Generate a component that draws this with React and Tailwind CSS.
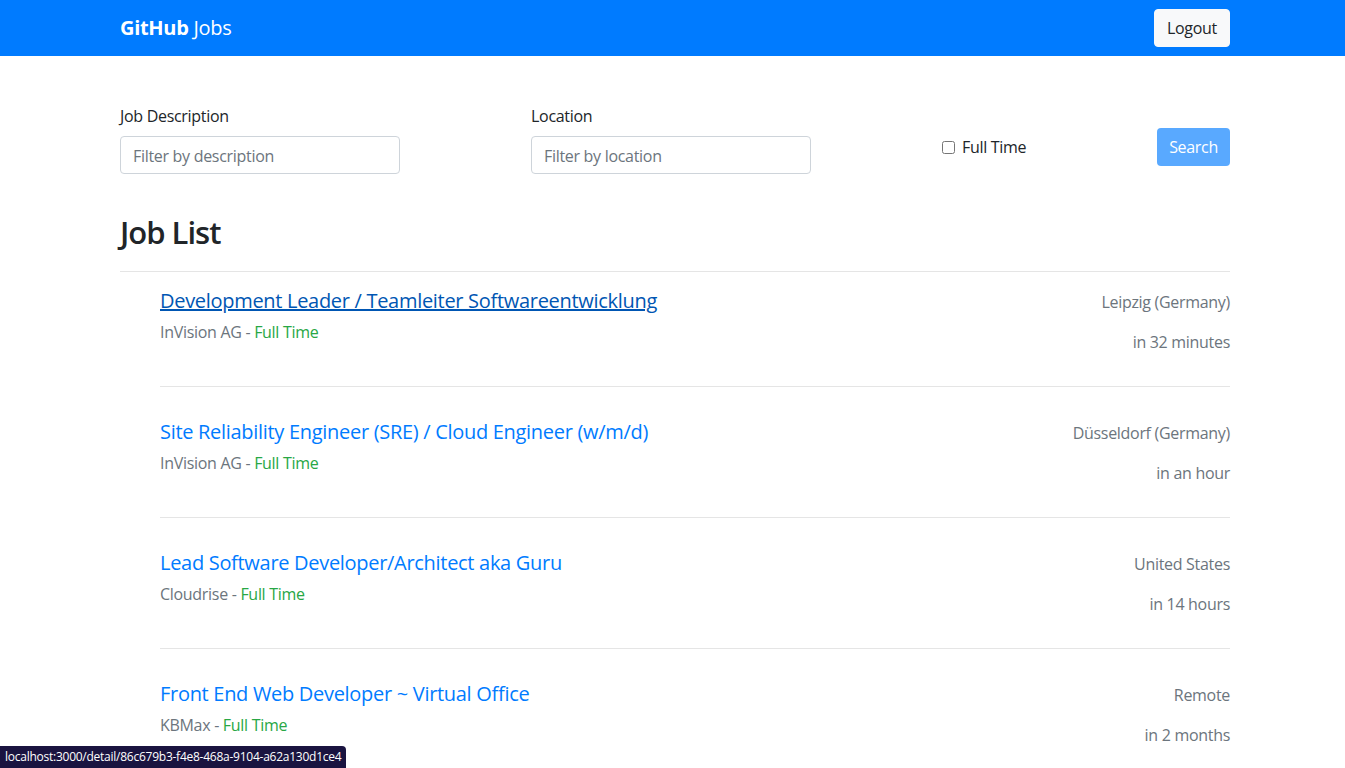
import { useState } from 'react';

const jobs = [
  {
    title: 'Development Leader / Teamleiter Softwareentwicklung',
    company: 'InVision AG',
    location: 'Leipzig (Germany)',
    posted: 'in 32 minutes',
    hovered: true,
  },
  {
    title: 'Site Reliability Engineer (SRE) / Cloud Engineer (w/m/d)',
    company: 'InVision AG',
    location: 'Düsseldorf (Germany)',
    posted: 'in an hour',
  },
  {
    title: 'Lead Software Developer/Architect aka Guru',
    company: 'Cloudrise',
    location: 'United States',
    posted: 'in 14 hours',
  },
  {
    title: 'Front End Web Developer ~ Virtual Office',
    company: 'KBMax',
    location: 'Remote',
    posted: 'in 2 months',
  },
];

export default function App() {
  const [description, setDescription] = useState('');
  const [location, setLocation] = useState('');
  const [fullTime, setFullTime] = useState(false);

  return (
    <div className="min-h-screen bg-white text-[#212529] font-['Open_Sans','Noto_Sans',sans-serif] text-[16px] tracking-[-0.3px]">
      {/* navbar */}
      <nav className="h-14 bg-[#007bff]">
        <div className="w-[1110px] ml-[120px] h-full flex items-center justify-between">
          <a href="#" className="text-white text-[20px] leading-none">
            <span className="font-bold">GitHub</span> Jobs
          </a>
          <button className="h-[38px] px-[12px] rounded bg-[#f8f9fa] text-[#212529] text-[16px] border border-[#f8f9fa]">
            Logout
          </button>
        </div>
      </nav>

      <main className="w-[1110px] ml-[120px] pt-12">
        {/* search form */}
        <div className="flex items-end">
          <div className="w-[411px]">
            <label className="block mb-2 leading-6">Job Description</label>
            <input
              value={description}
              onChange={(e) => setDescription(e.target.value)}
              placeholder="Filter by description"
              className="w-[280px] h-[38px] px-3 pt-px border border-[#ced4da] rounded placeholder:text-[#6c757d] outline-none"
            />
          </div>
          <div className="w-[411px]">
            <label className="block mb-2 leading-6">Location</label>
            <input
              value={location}
              onChange={(e) => setLocation(e.target.value)}
              placeholder="Filter by location"
              className="w-[280px] h-[38px] px-3 pt-px border border-[#ced4da] rounded placeholder:text-[#6c757d] outline-none"
            />
          </div>
          <label className="flex items-center gap-[7px] mb-[15px]">
            <input
              type="checkbox"
              checked={fullTime}
              onChange={(e) => setFullTime(e.target.checked)}
              className="w-[13px] h-[13px]"
            />
            <span className="leading-6">Full Time</span>
          </label>
          <button
            disabled
            className="ml-auto mb-2 h-[38px] px-3 rounded bg-[#59a9ff] text-white"
          >
            Search
          </button>
        </div>

        <h2 className="mt-[39px] text-[31px] font-semibold leading-[38px] tracking-[-1px]">Job List</h2>
        <hr className="mt-[20px] border-[#e5e5e5]" />

        <ul className="pl-10">
          {jobs.map((job, i) => (
            <li
              key={i}
              className={`flex justify-between border-b border-[#e5e5e5] pb-4 ${i === 0 ? 'pt-[17px]' : 'pt-[33px]'}`}
            >
              <div>
                <a
                  href="#"
                  className={`block text-[20px] leading-6 ${job.hovered ? 'text-[#0056b3] underline' : 'text-[#007bff]'}`}
                >
                  {job.title}
                </a>
                <p className="mt-[7px] leading-6 text-[#6c757d]">
                  {job.company} - <span className="text-[#28a745]">Full Time</span>
                </p>
              </div>
              <div className="text-right text-[#6c757d] leading-6">
                <p className="mt-px mb-4">{job.location}</p>
                <p className="mb-4">{job.posted}</p>
              </div>
            </li>
          ))}
        </ul>
      </main>

      <div className="fixed left-0 bottom-0 h-[22px] px-[5px] flex items-center bg-[#1a1440] text-white text-[12px] tracking-[-0.25px] rounded-tr">
        localhost:3000/detail/86c679b3-f4e8-468a-9104-a62a130d1ce4
      </div>
    </div>
  );
}
